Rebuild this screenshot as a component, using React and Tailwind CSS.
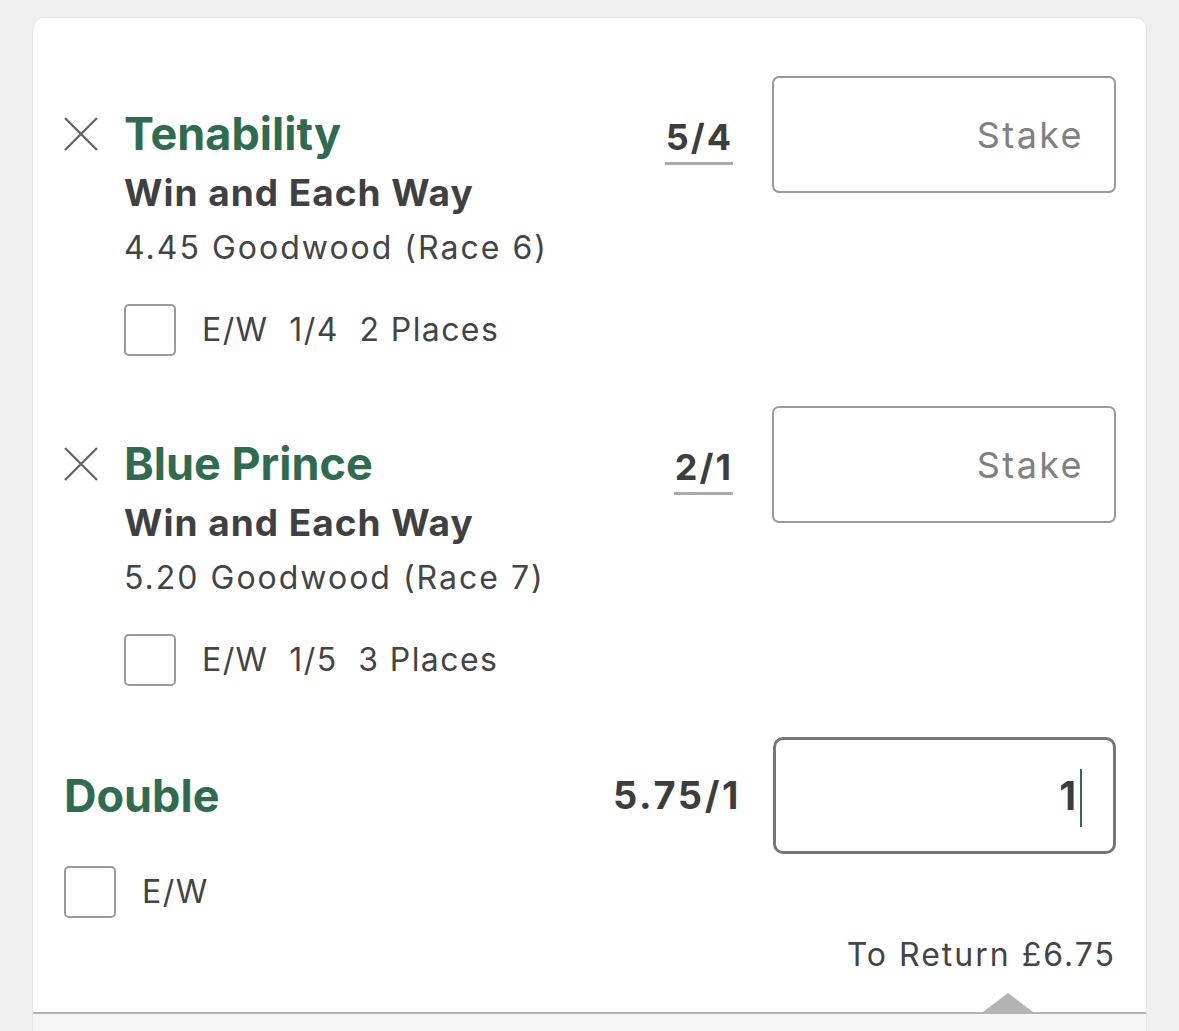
import React from 'react';

const font = { fontFamily: 'Inter, "Noto Sans", sans-serif' };

const CloseIcon = () => (
  <svg width="34" height="34" viewBox="0 0 34 34" className="shrink-0">
    <path d="M1 1 L33 33 M33 1 L1 33" stroke="#666666" strokeWidth="2.4" fill="none" />
  </svg>
);

const Checkbox = () => (
  <div className="w-[52px] h-[52px] rounded-[5px] border-2 border-[#9a9a9a] bg-white shrink-0" />
);

const StakeBox = ({ value }) =>
  value ? (
    <div className="w-[343px] h-[117px] rounded-[10px] border-[3px] border-[#767676] flex items-center justify-end pr-[31px] shrink-0">
      <span className="text-[39px] font-bold text-[#3d3d3d] leading-none">{value}</span>
      <span className="w-[2px] h-[58px] bg-[#2f6c4f] ml-[4px] mt-[4px]" />
    </div>
  ) : (
    <div className="w-[344px] h-[117px] rounded-[7px] border-2 border-[#9a9a9a] flex items-center justify-end pr-[30px] shrink-0">
      <span className="text-[36px] tracking-[2.4px] text-[#808080]">Stake</span>
    </div>
  );

const Selection = ({ name, odds, venue, terms }) => (
  <div className="flex items-start">
    <div className="flex-1 flex pt-[29px]">
      <div className="w-[60px] h-[58px] flex items-center">
        <CloseIcon />
      </div>
      <div className="flex flex-col">
        <div className="text-[45px] font-bold text-[#2f6c4f] leading-[58px]">{name}</div>
        <div className="text-[37px] font-bold tracking-[1px] text-[#404040] leading-[60px]">Win and Each Way</div>
        <div className="text-[32px] tracking-[2px] text-[#444444] leading-[50px]">{venue}</div>
        <div className="flex items-center mt-[31px]">
          <Checkbox />
          <span className="ml-[26px] text-[32px] tracking-[1.4px] text-[#444444] whitespace-pre">{terms}</span>
        </div>
      </div>
    </div>
    <div className="flex items-start">
      <span className="mt-[39px] text-[36px] font-bold tracking-[2px] text-[#3d3d3d] border-b-[3px] border-[#ababab] leading-[44px] pb-[3px] pl-[1px]">{odds}</span>
      <div className="w-[39px]" />
      <StakeBox />
    </div>
  </div>
);

export default function App() {
  return (
    <div className="h-[1031px] overflow-hidden bg-[#efefef] pt-[17px] pl-[32px] pr-[32px]" style={font}>
      <div className="bg-white rounded-t-[12px] border border-[#e4e4e4] h-[1100px] flex flex-col">
        <div className="pt-[58px] pl-[31px] pr-[30px]">
          <Selection name="Tenability" odds="5/4" venue="4.45 Goodwood (Race 6)" terms={'E/W  1/4  2 Places'} />
          <div className="h-[50px]" />
          <Selection name="Blue Prince" odds="2/1" venue="5.20 Goodwood (Race 7)" terms={'E/W  1/5  3 Places'} />
          <div className="h-[51px]" />
          <div className="flex items-center">
            <span className="flex-1 text-[45px] font-bold text-[#2f6c4f]">Double</span>
            <span className="text-[38px] font-bold tracking-[2.6px] text-[#3d3d3d]">5.75/1</span>
            <div className="w-[32px]" />
            <StakeBox value="1" />
          </div>
          <div className="flex items-center mt-[12px]">
            <Checkbox />
            <span className="ml-[26px] text-[32px] tracking-[1.5px] text-[#444444]">E/W</span>
          </div>
          <div className="flex justify-end mt-[16px]">
            <span className="text-[32px] tracking-[2px] text-[#444444] leading-[42px]">To Return £6.75</span>
          </div>
        </div>
        <div className="relative mt-[36px] border-b-2 border-[#b3b3b3]">
          <div className="absolute right-[113px] bottom-0 w-0 h-0 border-l-[25px] border-r-[25px] border-b-[19px] border-l-transparent border-r-transparent border-b-[#b3b3b3]" />
        </div>
        <div className="flex-1 bg-[#f6f6f6]" />
      </div>
    </div>
  );
}
